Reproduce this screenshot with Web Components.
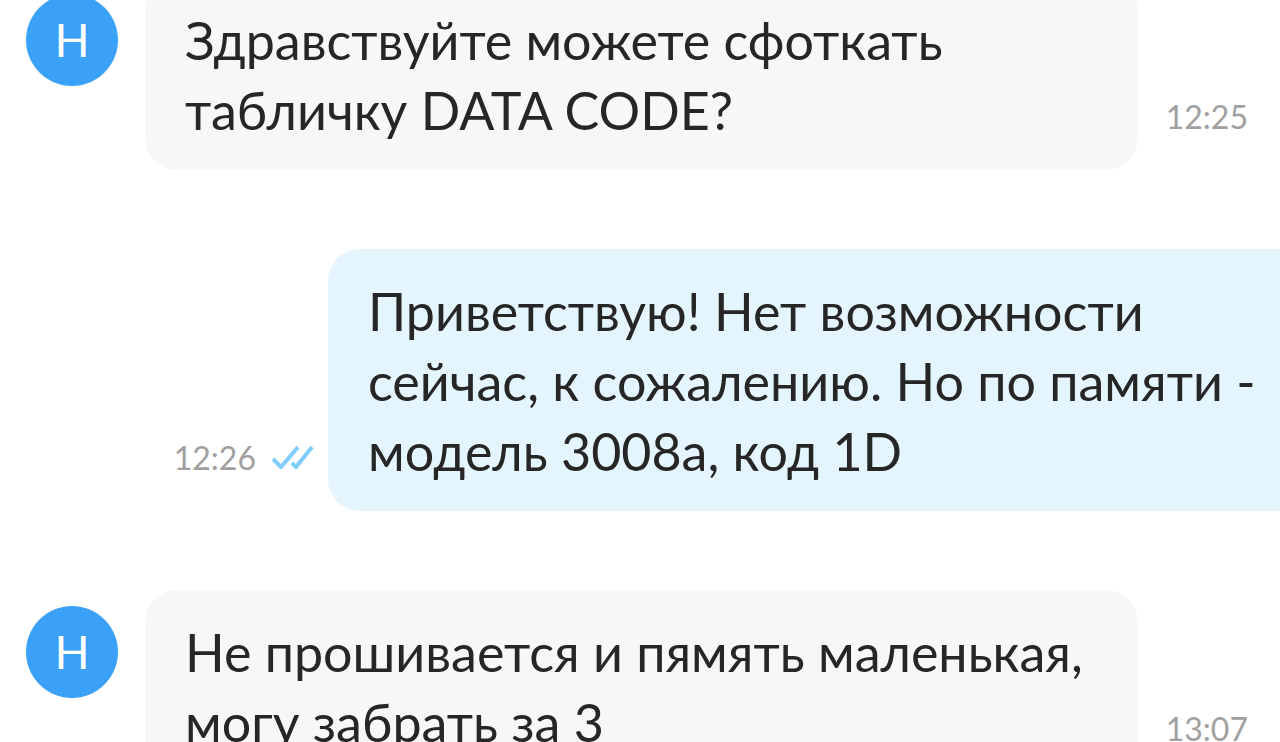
<!DOCTYPE html>
<html lang="ru"><head><meta charset="utf-8"><title>Чат</title>
<style>html,body{height:100%}body{margin:0;background:#fff;overflow:hidden}</style></head>
<body>
<chat-thread>
<chat-message sender="Н" time="12:25" clipped>Здравствуйте можете сфоткать табличку DATA CODE?</chat-message>
<chat-message own time="12:26">Приветствую! Нет возможности сейчас, к сожалению. Но по памяти - модель 3008a, код 1D</chat-message>
<chat-message sender="Н" time="13:07">Не прошивается и пямять маленькая, могу забрать за 3</chat-message>
</chat-thread>
<script>
class ChatThread extends HTMLElement{
 constructor(){super();this.attachShadow({mode:'open'}).innerHTML=`<style>
 :host{display:block;height:100%;overflow:hidden;font-family:Lato,Carlito,"Open Sans",sans-serif;color:#262626}
 main{display:flex;flex-direction:column;gap:79px}
 </style><main><slot></slot></main>`}
}
class UserAvatar extends HTMLElement{
 constructor(){super();this.attachShadow({mode:'open'}).innerHTML=`<style>
 :host{display:flex;flex:none;align-items:center;justify-content:center;width:92px;height:92px;border-radius:50%;background:#3ba1f8;color:#fff;font-size:46px;line-height:52px}
 </style><slot></slot>`}
}
class ReadMark extends HTMLElement{
 constructor(){super();this.attachShadow({mode:'open'}).innerHTML=`<style>
 :host{display:block;flex:none;width:42px;height:28px}svg{display:block}
 </style><svg width="42" height="28" viewBox="0 0 42 28" fill="none" stroke="#7fcdfb" stroke-width="4" stroke-linejoin="round" role="img" aria-label="Прочитано"><path d="M1 15l8 8L26 3M20 19l4 4L40 3"/></svg>`}
}
class ChatMessage extends HTMLElement{
 constructor(){super();this.attachShadow({mode:'open'})}
 connectedCallback(){
 const own=this.hasAttribute('own'),t=this.getAttribute('time');
 const meta=`<div class="meta"><time>${t}</time>${own?'<read-mark></read-mark>':''}</div>`;
 this.shadowRoot.innerHTML=`<style>
 :host{display:block}
 article{display:flex;align-items:flex-end;padding:0 32px 0 26px}
 user-avatar{align-self:flex-start;margin:16px 27px 0 0}
 .bubble{flex:1;min-width:0;box-sizing:border-box;margin:0;padding:27px 40px 25px;border-radius:32px;background:#f7f7f7;font-size:52px;line-height:70px}
 .meta{display:flex;flex:none;align-items:center;gap:16px;padding:0 0 33px 28px;font-size:32px;line-height:40px;color:#a0a0a0}
 :host([clipped]) article{margin-top:-22px}
 :host([own]) article{flex-direction:row-reverse;padding:0}
 :host([own]) .bubble{flex:none;width:calc(100% - 328px);padding-right:0;border-radius:32px 0 0 32px;background:#e4f5fe}
 :host([own]) .meta{padding:0 14px 33px 0}
 </style><article>${own?'':`<user-avatar>${this.getAttribute('sender')}</user-avatar>`}<p class="bubble"><slot></slot></p>${meta}</article>`}
}
customElements.define('user-avatar',UserAvatar);
customElements.define('read-mark',ReadMark);
customElements.define('chat-message',ChatMessage);
customElements.define('chat-thread',ChatThread);
</script></body></html>
